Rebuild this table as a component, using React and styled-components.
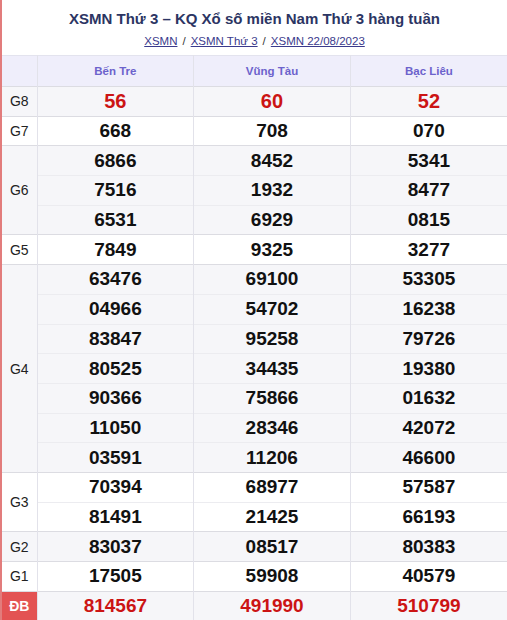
import React from "react";
import styled, { createGlobalStyle } from "styled-components";

const GlobalStyle = createGlobalStyle`
  html, body {
    margin: 0;
    padding: 0;
    background: #fff;
    font-family: "Liberation Sans", Arial, sans-serif;
  }
`;

const Page = styled.div`
  width: 507px;
  min-height: 620px;
  box-sizing: border-box;
  border-left: 2px solid #e27c7c;
  background: #fff;
`;

const Title = styled.h2`
  margin: 0;
  padding-top: 10px;
  text-align: center;
  font-size: 15px;
  line-height: 18px;
  font-weight: bold;
  color: #2c3563;
`;

const Crumbs = styled.div`
  display: flex;
  justify-content: center;
  gap: 5px;
  margin-top: 6px;
  height: 21px;
  font-size: 11.5px;
  line-height: 14px;
  color: #333;
`;

const Crumb = styled.a`
  color: #3a3a8c;
  text-decoration: underline;
`;

const Table = styled.table`
  width: 100%;
  border-collapse: collapse;
  table-layout: fixed;
`;

const HeadCell = styled.th`
  height: 30px;
  padding: 0;
  background: #efeefb;
  color: #6c62cc;
  font-size: 11.5px;
  font-weight: bold;
  border-top: 1px solid #e3e3ee;
  border-right: 1px solid #e2e2ea;
  &:last-child { border-right: none; }
`;

const Row = styled.tr`
  background: ${p => (p.$shade ? "#f6f6f9" : "#fff")};
  border-top: 1px solid ${p => (p.$first ? "#dcdce2" : "#ececf0")};
`;

const Label = styled.td`
  padding: 0;
  text-align: center;
  font-size: 14px;
  border-right: 1px solid #e2e2ea;
  background: ${p => (p.$special ? "#e35353" : "inherit")};
  color: ${p => (p.$special ? "#fff" : "#222")};
  font-weight: ${p => (p.$special ? "bold" : "normal")};
`;

const Num = styled.td`
  height: 28.7px;
  padding: 0;
  text-align: center;
  font-size: ${p => (p.$big ? "20px" : "19px")};
  font-weight: bold;
  color: ${p => (p.$red ? "#cc1414" : "#111")};
  border-right: 1px solid #e2e2ea;
  &:last-child { border-right: none; }
`;

const provinces = ["Bến Tre", "Vũng Tàu", "Bạc Liêu"];

const prizes = [
  { name: "G8", rows: [["56", "60", "52"]], red: true, big: true },
  { name: "G7", rows: [["668", "708", "070"]] },
  {
    name: "G6",
    rows: [
      ["6866", "8452", "5341"],
      ["7516", "1932", "8477"],
      ["6531", "6929", "0815"]
    ]
  },
  { name: "G5", rows: [["7849", "9325", "3277"]] },
  {
    name: "G4",
    rows: [
      ["63476", "69100", "53305"],
      ["04966", "54702", "16238"],
      ["83847", "95258", "79726"],
      ["80525", "34435", "19380"],
      ["90366", "75866", "01632"],
      ["11050", "28346", "42072"],
      ["03591", "11206", "46600"]
    ]
  },
  {
    name: "G3",
    rows: [
      ["70394", "68977", "57587"],
      ["81491", "21425", "66193"]
    ]
  },
  { name: "G2", rows: [["83037", "08517", "80383"]] },
  { name: "G1", rows: [["17505", "59908", "40579"]] },
  { name: "ĐB", rows: [["814567", "491990", "510799"]], red: true, special: true }
];

const App = () => (
  <Page>
    <GlobalStyle />
    <Title>XSMN Thứ 3 – KQ Xổ số miền Nam Thứ 3 hàng tuần</Title>
    <Crumbs>
      <Crumb href="#">XSMN </Crumb>/
      <Crumb href="#">XSMN Thứ 3 </Crumb>/
      <Crumb href="#">XSMN 22/08/2023</Crumb>
    </Crumbs>
    <Table>
      <colgroup>
        <col style={{ width: 35 }} />
        <col />
        <col />
        <col />
      </colgroup>
      <thead>
        <tr>
          <HeadCell />
          {provinces.map(p => (
            <HeadCell key={p}>{p}</HeadCell>
          ))}
        </tr>
      </thead>
      <tbody>
        {prizes.map((prize, i) =>
          prize.rows.map((row, j) => (
            <Row key={prize.name + j} $shade={i % 2 === 0} $first={j === 0}>
              {j === 0 && (
                <Label rowSpan={prize.rows.length} $special={prize.special}>
                  {prize.name}
                </Label>
              )}
              {row.map((n, k) => (
                <Num key={k} $red={prize.red} $big={prize.big}>
                  {n}
                </Num>
              ))}
            </Row>
          ))
        )}
      </tbody>
    </Table>
  </Page>
);

export default App;
